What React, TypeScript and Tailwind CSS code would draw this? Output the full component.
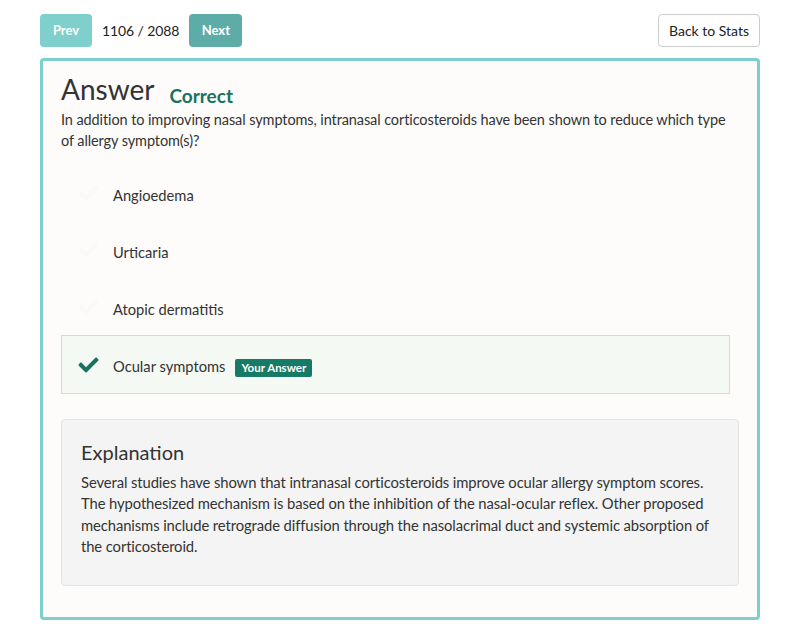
import React from "react";
import { FaCheck } from "react-icons/fa";

const options = [
  { label: "Angioedema", mine: false },
  { label: "Urticaria", mine: false },
  { label: "Atopic dermatitis", mine: false },
  { label: "Ocular symptoms", mine: true },
];

const App = () => {
  return (
    <div className="min-h-[643px] w-[800px] bg-white font-['Lato','Open_Sans',sans-serif] text-[#333]">
      <div className="px-10 pt-[14px]">
        {/* nav */}
        <div className="flex items-center justify-between">
          <div className="flex items-center">
            <button className="h-[33px] w-[52px] rounded-[4px] bg-[#7fcfcc] text-[13px] font-bold text-white">
              Prev
            </button>
            <span className="mx-[10px] text-[14px] tracking-[-0.1px] text-[#222]">1106 / 2088</span>
            <button className="h-[33px] w-[53px] rounded-[4px] bg-[#5eaca8] text-[13px] font-bold text-white">
              Next
            </button>
          </div>
          <button className="h-[33px] w-[102px] rounded-[4px] border border-[#ccc] bg-white text-[14px] text-[#222]">
            Back to Stats
          </button>
        </div>

        {/* card */}
        <div className="mt-[11px] rounded-[4px] border-[3px] border-[#7ccfcc] bg-[#fdfcfa] px-[18px] pb-[31px] pt-[10px]">
          <div className="flex items-end">
            <h1 className="text-[28px] leading-[36px] text-[#333]">Answer</h1>
            <span className="mb-[-3px] ml-[15px] text-[19px] font-bold leading-[28px] text-[#16735f]">Correct</span>
          </div>
          <p className="mt-[2px] text-[14.5px] leading-[21px] tracking-[-0.1px] text-[#333]">
            In addition to improving nasal symptoms, intranasal corticosteroids have been shown to reduce which type of allergy symptom(s)?
          </p>

          <ul className="mr-[9px] mt-[13px]">
            {options.map((o) =>
              o.mine ? (
                <li
                  key={o.label}
                  className="flex h-[59px] items-center border border-[#c9e4c5] bg-[#f4f9f3] pl-[16px]"
                >
                  <FaCheck className="h-[20px] w-[21px] text-[#16735f]" />
                  <span className="ml-[14px] mt-[4px] text-[14.7px] text-[#333]">{o.label}</span>
                  <span className="ml-[10px] mt-[6px] rounded-[2px] bg-[#177a67] px-[6px] py-[2px] text-[11.5px] font-bold leading-[14px] text-white">
                    Your Answer
                  </span>
                </li>
              ) : (
                <li key={o.label} className="flex h-[57px] items-center pl-[17px]">
                  <FaCheck className="h-[20px] w-[21px] text-[#f9f9f7]" />
                  <span className="ml-[14px] mt-[5px] text-[14.7px] text-[#333]">{o.label}</span>
                </li>
              )
            )}
          </ul>

          <div className="mt-[25px] rounded-[4px] border border-[#e3e3e3] bg-[#f4f4f4] px-[19px] pb-[28px] pt-[18px]">
            <h2 className="text-[20px] leading-[28px] text-[#333]">Explanation</h2>
            <p className="mt-[6px] text-[14.8px] leading-[21.3px] tracking-[-0.1px] text-[#333]">
              Several studies have shown that intranasal corticosteroids improve ocular allergy symptom scores. The hypothesized mechanism is based on the inhibition of the nasal-ocular reflex. Other proposed mechanisms include retrograde diffusion through the nasolacrimal duct and systemic absorption of the corticosteroid.
            </p>
          </div>
        </div>
      </div>
    </div>
  );
};

export default App;
